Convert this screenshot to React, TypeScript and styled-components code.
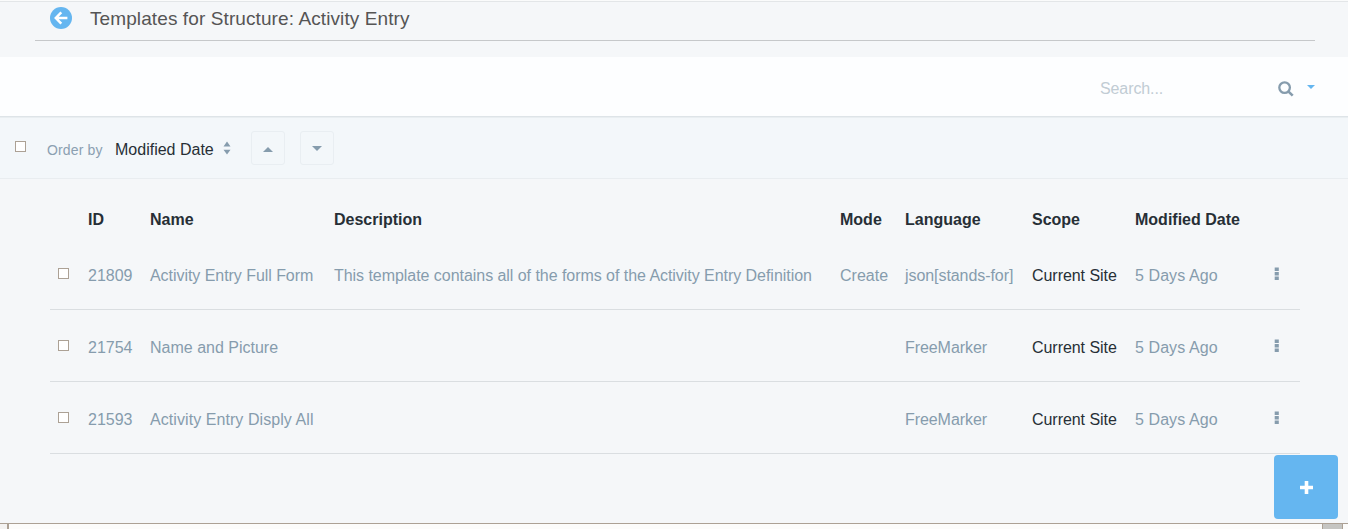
import React from "react";
import styled, { createGlobalStyle } from "styled-components";

const GlobalStyle = createGlobalStyle`
  * { box-sizing: border-box; }
  body {
    margin: 0;
    background: #f5f7f9;
    font-family: "Liberation Sans", Arial, sans-serif;
    font-size: 16px;
    line-height: 24px;
    color: #869cad;
    overflow: hidden;
  }
`;

const Page = styled.div`
  height: 529px;
  display: flex;
  flex-direction: column;
  position: relative;
`;

const Header = styled.header`
  height: 57px;
  padding: 1px 33px 0 35px;
  flex: none;
  background: linear-gradient(#fafbfb 1px, #e3e6e8 1px 2px, #f5f7f9 2px);
`;

const TitleRow = styled.div`
  height: 40px;
  padding: 0 0 5px 15px;
  display: flex;
  align-items: center;
  gap: 18px;
  border-bottom: 1px solid #c6c8ca;
`;

const Title = styled.h1`
  margin: 0;
  padding-top: 2px;
  font-size: 19px;
  font-weight: 400;
  letter-spacing: 0.1px;
  color: #555;
  white-space: nowrap;
`;

const SearchBar = styled.div`
  height: 60px;
  flex: none;
  padding: 5px 33px 0 1100px;
  display: flex;
  align-items: center;
  background: #fdfeff;
  border-bottom: 1px solid #dee4e8;
`;

const Placeholder = styled.span`
  width: 178px;
  letter-spacing: -0.1px;
  color: #c1ccd4;
`;

const Toolbar = styled.div`
  height: 62px;
  flex: none;
  padding: 1px 0 0 15px;
  display: flex;
  align-items: center;
  background: #f3f7fa;
  border-bottom: 1px solid #e9edf0;
  box-shadow: inset 0 1px 0 #e9eef1;
`;

const Checkbox = styled.span`
  display: block;
  flex: none;
  width: 11px;
  height: 11px;
  border: 1px solid #aca195;
  background: #fff;
  margin-bottom: 4px;
`;

const OrderLabel = styled.span`
  width: 68px;
  margin-left: 21px;
  padding-top: 3px;
  font-size: 14px;
  letter-spacing: 0.15px;
  color: #8ba0b1;
`;

const OrderValue = styled.span`
  width: 108px;
  padding-top: 3px;
  color: #272f36;
  white-space: nowrap;
`;

const SortButton = styled.button<{ $gap: number; $drop?: number }>`
  width: 34px;
  height: 34px;
  margin: 0 0 0 ${(p) => p.$gap}px;
  padding: ${(p) => p.$drop ?? 0}px 0 0;
  display: flex;
  align-items: center;
  justify-content: center;
  border: 1px solid #e9eef2;
  border-radius: 3px;
  background: transparent;
`;

const Table = styled.div`
  margin: 0 48px 0 50px;
`;

const Row = styled.div<{ $head?: boolean }>`
  display: grid;
  grid-template-columns: 30px 62px 184px 506px 65px 127px 103px 139px 1fr;
  align-items: center;
  padding-left: 8px;
  height: ${(p) => (p.$head ? 59 : 72)}px;
  padding-top: ${(p) => (p.$head ? 22 : 4)}px;
  border-bottom: ${(p) => (p.$head ? "none" : "1px solid #dadee1")};
  font-weight: ${(p) => (p.$head ? 700 : 400)};
  color: ${(p) => (p.$head ? "#272f36" : "#869cad")};
  white-space: nowrap;
`;

const Cell = styled.span<{ $dark?: boolean; $tracking?: number }>`
  color: ${(p) => (p.$dark ? "#272f36" : "inherit")};
  letter-spacing: ${(p) => p.$tracking ?? 0}px;
`;

const Dots = styled.svg`
  display: block;
  margin-bottom: 4px;
`;

const AddButton = styled.button`
  position: absolute;
  right: 10px;
  bottom: 10px;
  width: 64px;
  height: 64px;
  padding: 1px 0 0 1px;
  display: flex;
  align-items: center;
  justify-content: center;
  border: 0;
  border-radius: 4px;
  background: #65b6f0;
`;

const StatusStrip = styled.footer`
  height: 6px;
  margin-top: auto;
  flex: none;
  display: flex;
  border-top: 1px solid #aca195;
`;

const Segment = styled.span<{ $width?: number; $tone: string }>`
  width: ${(p) => (p.$width ? `${p.$width}px` : "auto")};
  flex: ${(p) => (p.$width ? "none" : 1)};
  background: ${(p) => p.$tone};
`;

const SearchCaret = styled.svg`
  margin: 0 0 4px 13px;
`;

const columns = ["ID", "Name", "Description", "Mode", "Language", "Scope", "Modified Date"];

const templates = [
  {
    id: "21809",
    name: "Activity Entry Full Form",
    nameTracking: -0.05,
    description: "This template contains all of the forms of the Activity Entry Definition",
    mode: "Create",
    language: "json[stands-for]",
  },
  { id: "21754", name: "Name and Picture", nameTracking: 0, description: "", mode: "", language: "FreeMarker" },
  { id: "21593", name: "Activity Entry Disply All", nameTracking: 0.07, description: "", mode: "", language: "FreeMarker" },
];

export default function App() {
  return (
    <Page>
      <GlobalStyle />
      <Header>
        <TitleRow>
          <svg width="22" height="22" viewBox="0 0 22 22">
            <circle cx="11" cy="11" r="11" fill="#65b6f0" />
            <path d="M11.3 5.3 5.8 11l5.5 5.7M6.3 11H17.4" fill="none" stroke="#fff" strokeWidth="2.5" />
          </svg>
          <Title>Templates for Structure: Activity Entry</Title>
        </TitleRow>
      </Header>
      <SearchBar>
        <Placeholder>Search...</Placeholder>
        <svg width="16" height="16" viewBox="0 0 16 16">
          <circle cx="6.6" cy="6.6" r="5.3" fill="none" stroke="#869cad" strokeWidth="2.3" />
          <path d="m10.3 10.3 4.4 4.4" stroke="#869cad" strokeWidth="2.6" />
        </svg>
        <SearchCaret width="8" height="4" viewBox="0 0 8 4">
          <path d="M0 0h8L4 4z" fill="#65b6f0" />
        </SearchCaret>
      </SearchBar>
      <Toolbar>
        <Checkbox />
        <OrderLabel>Order by</OrderLabel>
        <OrderValue>Modified Date</OrderValue>
        <svg width="8" height="14" viewBox="0 0 8 14">
          <path d="M.5 5.4h7L4 .6zM.5 8.8h7L4 13.6z" fill="#869cad" />
        </svg>
        <SortButton $gap={20} $drop={2}>
          <svg width="10" height="5" viewBox="0 0 10 5"><path d="M0 5h10L5 0z" fill="#869cad" /></svg>
        </SortButton>
        <SortButton $gap={15}>
          <svg width="10" height="5" viewBox="0 0 10 5"><path d="M0 0h10L5 5z" fill="#869cad" /></svg>
        </SortButton>
      </Toolbar>
      <Table>
        <Row $head>
          <Cell />
          {columns.map((c) => <Cell key={c}>{c}</Cell>)}
        </Row>
        {templates.map((t) => (
          <Row key={t.id}>
            <Checkbox />
            <Cell>{t.id}</Cell>
            <Cell $tracking={t.nameTracking}>{t.name}</Cell>
            <Cell $tracking={-0.045}>{t.description}</Cell>
            <Cell>{t.mode}</Cell>
            <Cell $tracking={-0.07}>{t.language}</Cell>
            <Cell $dark $tracking={-0.05}>Current Site</Cell>
            <Cell $tracking={0.08}>5 Days Ago</Cell>
            <Dots width="5" height="14" viewBox="0 0 5 14">
              <path d="M.7 .4h4.1v3.7H.7zM.7 4.9h4.1v3.7H.7zM.7 9.4h4.1v3.7H.7z" fill="#869cad" />
            </Dots>
          </Row>
        ))}
      </Table>
      <StatusStrip>
        <Segment $width={7} $tone="#f4f3f2" />
        <Segment $width={2} $tone="#aca195" />
        <Segment $tone="#fcfcfb" />
        <Segment $width={1} $tone="#aca195" />
        <Segment $width={19} $tone="#c5c5c2" />
        <Segment $width={1} $tone="#aca195" />
        <Segment $width={5} $tone="#fcfcfb" />
      </StatusStrip>
      <AddButton aria-label="Add">
        <svg width="13" height="13" viewBox="0 0 13 13">
          <path d="M6.5 0v13M0 6.5h13" stroke="#fff" strokeWidth="3.6" />
        </svg>
      </AddButton>
    </Page>
  );
}
